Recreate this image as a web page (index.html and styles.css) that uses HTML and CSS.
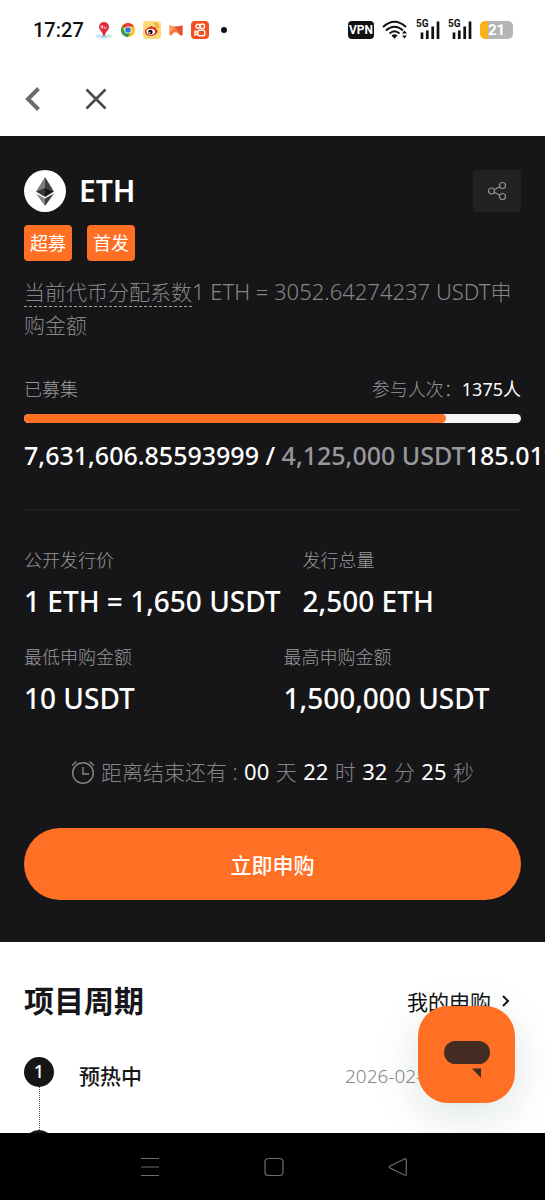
FILE: index.html
```html
<!DOCTYPE html>
<html lang="zh-CN">
<head>
<meta charset="utf-8">
<meta name="viewport" content="width=device-width, initial-scale=1">
<title>ETH</title>
<link rel="stylesheet" href="styles.css">
</head>
<body>
<div class="app">
  <header class="status">
    <span class="time">17:27</span>
    <div class="apps">
      <svg width="18" height="18" viewBox="0 0 18 18"><ellipse cx="4" cy="15" rx="3.500" ry="2" fill="#cfe6f5"/><ellipse cx="13.500" cy="15" rx="3.500" ry="2" fill="#cdeedd"/><path d="M5 16l4-2.500 4 2.500-4 1.800z" fill="#a9d8f3"/><path d="M9 1a5 5 0 0 1 5 5c0 3-3.600 4.500-4.300 9H8.300C7.600 10.500 4 9 4 6a5 5 0 0 1 5-5z" fill="#dd2b36"/><path d="M7.600 4.200v3.300M7.600 6.500a1 1 0 1 0-1.700.1 1 1 0 0 0 1.700-.1M9.300 5.500v1.200c0 1.200 1.800 1.200 1.800 0V5.500" stroke="#fff" stroke-width=".7" fill="none"/></svg>
      <svg width="18" height="18" viewBox="0 0 18 18"><circle cx="9" cy="9" r="7" fill="#fbc116"/><path d="M9 9L2.900 5.500A7 7 0 0 1 15.100 5.500H9z" fill="#e33b2e"/><path d="M2.900 5.500A7 7 0 0 0 9 16l3-5.200L9 9 6 10.700z" fill="#2a9d4e"/><circle cx="9" cy="9" r="3.600" fill="#fff"/><circle cx="9" cy="9" r="2.800" fill="#2b74e2"/></svg>
      <svg width="18" height="18" viewBox="0 0 18 18"><rect width="18" height="18" rx="4" fill="#fbd978"/><path d="M7.500 5.600C9 4.700 10 5.200 9.800 6.700c1.800-.7 3.400-.4 3.100 1.500 1.300.4 1.800 1.100 1.700 2-.3 2.500-3.300 4.500-6.900 4.500-3.300 0-5.700-1.500-5.700-3.800 0-1.800 2.500-4.200 5.500-5.300z" fill="#db2620"/><ellipse cx="7.700" cy="10.800" rx="4.300" ry="3" fill="#fff"/><circle cx="7.400" cy="11" r="2.300" fill="#15100d"/><circle cx="6.600" cy="11.700" r=".8" fill="#fff"/><path d="M11 2.600c3.300-.5 5.300 2 4.300 5M11.500 4.800c1.500-.2 2.400.8 2 2.100" stroke="#ee9b2b" stroke-width="1.200" fill="none"/></svg>
      <svg width="18" height="18" viewBox="0 0 18 18"><path d="M2.500 4.500L8 5.500h2l5.500-1V14l-2 .500-3.500-3h-3L4 14.500l-1.500-.5z" fill="#f57a42"/><path d="M8 5.500h2l5.500-1V14l-2 .500z" fill="#e84e30"/><path d="M2.500 4.500L8 5.500l-5.500 7z" fill="#f9a263"/></svg>
      <svg width="18" height="18" viewBox="0 0 18 18"><rect width="18" height="18" rx="4" fill="#f2501d"/><g fill="none" stroke="#fff" stroke-width="1.400"><circle cx="7" cy="5.300" r="2"/><circle cx="11.300" cy="5.300" r="2.300"/><rect x="6.800" y="9.300" width="7" height="5.400" rx="1.500"/><path d="M6.500 11.200L4 10v4l2.500-1"/></g></svg>
      <svg width="6" height="18" viewBox="0 0 6 18"><circle cx="3" cy="9" r="3" fill="#111"/></svg>
    </div>
    <div class="signals">
      <span class="vpn">VPN</span>
      <svg width="26" height="20" viewBox="0 0 26 20"><g fill="none" stroke="#111" stroke-width="2"><path d="M1 7q11.500-10.500 23 0"/><path d="M4 10.500q8.500-7.500 17 0"/><path d="M7.500 13.500q5-4.500 10 0"/></g><path d="M9.500 15.500q3-2.500 6 0L12.500 18.700z" fill="#111"/><path d="M20 13.500l2.500-3 2.500 3zM20 15.500l2.500 3 2.500-3z" fill="#111"/></svg>
      <div class="cell"><span>5G</span><svg width="24" height="20" viewBox="0 0 24 20"><path d="M6 12.500V19M11.300 10.500V19M16.700 6.500V19M22 1.500V19" stroke="#111" stroke-width="2.700"/></svg></div>
      <div class="cell"><span>5G</span><svg width="24" height="20" viewBox="0 0 24 20"><path d="M6 12.500V19M11.300 10.500V19M16.700 6.500V19M22 1.500V19" stroke="#111" stroke-width="2.700"/></svg></div>
      <span class="battery">21</span>
    </div>
  </header>
  <nav class="browser">
    <button aria-label="返回"><svg width="18" height="26" viewBox="0 0 18 26"><path d="M14.500 2.500L4 13l10.500 10.500" fill="none" stroke="#6b6b6b" stroke-width="4"/></svg></button>
    <button aria-label="关闭"><svg width="24" height="24" viewBox="0 0 24 24"><path d="M2.500 2.500l19 19M21.500 2.500l-19 19" fill="none" stroke="#4a4a4a" stroke-width="2.600"/></svg></button>
  </nav>
  <main class="page">
    <section class="offer">
      <div class="head">
        <svg width="42" height="42" viewBox="0 0 42 42"><circle cx="21" cy="21" r="21" fill="#fff"/><path d="M21 7l-9 14.500 9-4z" fill="#7d7d80"/><path d="M21 7l9 14.500-9-4z" fill="#3e3e41"/><path d="M12 21.500l9-4v9.500z" fill="#39393b"/><path d="M30 21.500l-9-4v9.500z" fill="#18181a"/><path d="M12 23.600l9 5V36z" fill="#858587"/><path d="M30 23.600l-9 5V36z" fill="#3e3e41"/></svg>
        <h1>ETH</h1>
        <button class="share" aria-label="分享"><svg width="20" height="20" viewBox="0 0 20 20"><g fill="none" stroke="#949496" stroke-width="1.200"><circle cx="4.500" cy="10" r="3"/><circle cx="15.500" cy="4.500" r="3"/><circle cx="15.500" cy="15.500" r="3"/><path d="M7.200 8.700l5.600-2.900M7.200 11.300l5.600 2.900"/></g></svg></button>
      </div>
      <div class="tags"><span>超募</span><span>首发</span></div>
      <p class="ratio"><span class="term">当前代币分配系数</span><span class="figure">1 ETH = 3052.64274237 USDT</span>申购金额</p>
      <div class="raised"><span>已募集</span><span>参与人次：<b>1375人</b></span></div>
      <div class="bar"><div class="fill"></div></div>
      <div class="amount"><span>7,631,606.85593999 / <i>4,125,000 USDT</i></span><span>185.01%</span></div>
      <dl class="facts">
        <div class="row">
          <div><dt>公开发行价</dt><dd>1 ETH = 1,650 USDT</dd></div>
          <div><dt>发行总量</dt><dd>2,500 ETH</dd></div>
        </div>
        <div class="row">
          <div><dt>最低申购金额</dt><dd>10 USDT</dd></div>
          <div><dt>最高申购金额</dt><dd>1,500,000 USDT</dd></div>
        </div>
      </dl>
      <div class="timer">
        <svg width="24" height="26" viewBox="0 0 24 26"><g fill="none" stroke="#868688" stroke-width="1.400"><circle cx="12" cy="14" r="10.300"/><path d="M12 8v7h6M1 6.500L5.500 2.500M23 6.500L18.500 2.500"/></g></svg>
        <span>距离结束还有 : <b>00</b> 天 <b>22</b> 时 <b>32</b> 分 <b>25</b> 秒</span>
      </div>
      <button class="buy">立即申购</button>
    </section>
    <section class="cycle">
      <div class="title"><h2>项目周期</h2><a href="#">我的申购<svg width="10" height="14" viewBox="0 0 10 14"><path d="M2 2l5 5-5 5" fill="none" stroke="#111" stroke-width="2"/></svg></a></div>
      <ol class="steps">
        <li><span class="num">1</span><span class="name">预热中</span><time>2026-02-05 18:00</time></li>
        <li><span class="num">2</span></li>
      </ol>
    </section>
    <button class="chat" aria-label="客服"><svg width="46" height="38" viewBox="0 0 46 38"><rect width="46" height="23" rx="11.500" fill="#432d22"/><path d="M28 27.500h9V37z" fill="#432d22"/></svg></button>
  </main>
  <footer class="keys">
    <button aria-label="菜单"><svg width="20" height="20" viewBox="0 0 20 20"><path d="M1 1.500h18M1 10h18M1 18.500h18" stroke="#6d6d6d" stroke-width="1.200"/></svg></button>
    <button aria-label="主页"><svg width="20" height="20" viewBox="0 0 20 20"><rect x="1" y="1.500" width="18" height="17" rx="3.500" fill="none" stroke="#6d6d6d" stroke-width="1.200"/></svg></button>
    <button aria-label="后退"><svg width="20" height="20" viewBox="0 0 20 20"><path d="M17 1.800L2 9q-1.500 1 0 2l15 7.200q1.300.3 1.300-1V2.800q0-1.300-1.300-1z" fill="none" stroke="#6d6d6d" stroke-width="1.200"/></svg></button>
  </footer>
</div>
</body>
</html>
```
FILE: styles.css
```css
* { box-sizing: border-box; }
body, h1, h2, p, dl, dd, ol { margin: 0; padding: 0; }
body { font-family: "Noto Sans", "Noto Sans CJK SC", sans-serif; background: #fff; color: #161618; }
button { border: 0; padding: 0; background: none; font: inherit; color: inherit; cursor: pointer; }
svg { display: block; flex: none; }
b, i { font-weight: inherit; font-style: normal; }

.app { display: flex; flex-direction: column; height: 100vh; }

.status { display: flex; align-items: center; height: 60px; padding: 0 32px 0 33px; font-family: Roboto, sans-serif; color: #111; }
.time { font-size: 20px; font-weight: 500; }
.apps { display: flex; gap: 6px; margin-left: 11px; }
.apps svg:last-child { margin-left: 6px; }
.signals { display: flex; align-items: center; gap: 8px; margin-left: auto; }
.vpn { width: 26px; border-radius: 4px; background: #111; color: #fff; font-size: 12px; font-weight: 700; line-height: 18px; text-align: center; }
.cell { position: relative; }
.cell span { position: absolute; top: 0; left: 0; font-size: 10px; font-weight: 700; line-height: 8px; }
.battery { width: 33px; border-radius: 5px; background: linear-gradient(to right, #fbb017 8px, #b5b5b5 8px); color: #fff; font-size: 15px; font-weight: 700; line-height: 18px; text-align: center; }

.browser { display: flex; align-items: center; gap: 42px; flex: none; height: 76px; padding: 2px 24px 0; }

.page { position: relative; flex: 1; min-height: 0; overflow: hidden; }
.offer { padding: 34px 24px 42px; background: #161618; color: #fff; }
.head { display: flex; align-items: center; gap: 13px; }
h1 { font-size: 30px; font-weight: 600; line-height: 42px; }
.share { display: flex; align-items: center; justify-content: center; width: 48px; height: 42px; margin-left: auto; border-radius: 3px; background: #222224; }
.tags { display: flex; gap: 15px; margin-top: 13px; }
.tags span { padding: 0 6px; border-radius: 4px; background: #ff6f24; font-size: 18px; line-height: 36px; }
.ratio { margin-top: 14px; color: #868688; font-size: 21px; font-weight: 300; line-height: 33px; }
.ratio .figure { font-size: 22px; }
.term { border-bottom: 1px dashed #a0a0a2; }
.raised { display: flex; justify-content: space-between; margin-top: 34px; color: #98989a; font-size: 18px; font-weight: 300; line-height: 26px; }
.raised b { color: #fff; font-weight: 400; }
.bar { height: 9px; margin-top: 12px; overflow: hidden; border-radius: 5px; background: #f5f5f5; }
.fill { width: 85%; height: 100%; border-radius: 5px; background: #ff6f24; }
.amount { display: flex; margin-top: 16px; padding-bottom: 38px; border-bottom: 2px solid #202023; font-size: 25px; font-weight: 500; line-height: 32px; white-space: nowrap; }
.amount i { color: #98989a; }
.facts { display: grid; gap: 20px; margin-top: 36px; }
.row { display: flex; gap: 22px; }
.row > div { flex: 1 1 0; white-space: nowrap; }
dt { color: #98989a; font-size: 18px; font-weight: 300; line-height: 27px; }
dd { margin-top: 5px; font-size: 28px; font-weight: 500; line-height: 45px; }
.timer { display: flex; align-items: center; justify-content: center; gap: 6px; margin-top: 34px; color: #868688; font-size: 21px; font-weight: 300; line-height: 32px; }
.timer b { margin: 0 1px; color: #fff; font-size: 22px; font-weight: 400; }
.buy { display: block; width: 100%; height: 72px; margin-top: 40px; border-radius: 36px; background: #ff6f24; font-size: 21px; font-weight: 500; }

.cycle { padding: 36px 24px 0; }
.title { display: flex; align-items: center; justify-content: space-between; }
h2 { font-size: 30px; font-weight: 600; line-height: 45px; }
.title a { display: flex; align-items: center; gap: 10px; padding-right: 10px; color: #111; font-size: 21px; text-decoration: none; }
.steps { margin-top: 34px; list-style: none; }
.steps li { position: relative; display: flex; align-items: flex-start; height: 73px; }
.steps li::before { content: ""; position: absolute; top: 30px; bottom: 0; left: 15px; border-left: 1px dotted #555; }
.num { width: 30px; height: 30px; border-radius: 50%; background: #161618; color: #fff; font-size: 18px; font-weight: 500; line-height: 29px; text-align: center; }
.name { margin-left: 25px; font-size: 21px; font-weight: 500; line-height: 38px; }
.steps time { margin-left: auto; padding-right: 24px; color: #868688; font-size: 19px; font-weight: 300; line-height: 38px; }
.chat { position: absolute; right: 30px; bottom: 30px; display: flex; align-items: center; justify-content: center; width: 97px; height: 97px; padding-top: 10px; border-radius: 30px; background: #ff6f24; box-shadow: 0 12px 44px rgba(30, 80, 65, 0.15); }

.keys { display: flex; align-items: center; justify-content: center; gap: 104px; flex: none; height: 67px; padding-left: 2px; background: #000; }
```
